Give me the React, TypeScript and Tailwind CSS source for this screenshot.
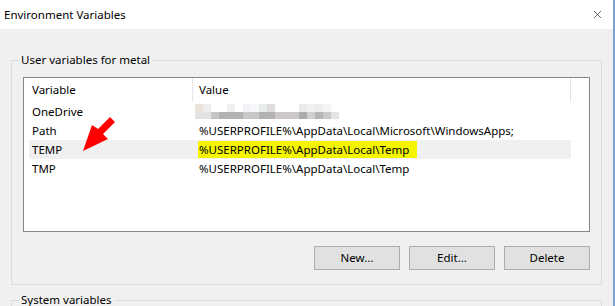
import { X } from 'lucide-react';

const rows = [
  { name: 'OneDrive', value: null },
  { name: 'Path', value: '%USERPROFILE%\\AppData\\Local\\Microsoft\\WindowsApps;' },
  { name: 'TEMP', value: '%USERPROFILE%\\AppData\\Local\\Temp', marked: true },
  { name: 'TMP', value: '%USERPROFILE%\\AppData\\Local\\Temp' },
];

// pixelated blur over the OneDrive path: [width, top colour, bottom colour]
const blurCells: [number, string, string][] = [
  [8, '#e9e6d8', '#e2e2e2'],
  [8, '#eeeeee', '#e2e2e2'],
  [8, '#ffffff', '#c7c4c7'],
  [8, '#ffffff', '#b3b2b3'],
  [8, '#efefef', '#b3b2b3'],
  [8, '#ffffff', '#b3b2b3'],
  [8, '#f2f3f7', '#c9c6c9'],
  [8, '#f5f7fa', '#c9c6c9'],
  [8, '#e8eceb', '#b3b2b3'],
  [8, '#e0dde0', '#b3b2b3'],
  [8, '#ffffff', '#cbc7cb'],
  [8, '#ffffff', '#cbc7cb'],
  [8, '#ffffff', '#cbc7cb'],
  [8, '#eaeaea', '#ababab'],
  [8, '#f0f0f0', '#cfcfcf'],
  [8, '#ececec', '#b5b5b5'],
  [8, '#f4f4f4', '#c9c9c9'],
  [8, '#ffffff', '#e4e4e4'],
];

function Blurred() {
  return (
    <div className="-ml-[4px] flex h-[19px] items-center">
      <div className="flex">
        {blurCells.map(([w, top, bottom], i) => (
          <div key={i} className="flex flex-col" style={{ width: w }}>
            <div className="h-[8px]" style={{ background: top }} />
            <div className="h-[7px]" style={{ background: bottom }} />
          </div>
        ))}
      </div>
    </div>
  );
}

function Button({ label }: { label: string }) {
  return (
    <button className="h-[24px] w-[86px] border border-[#adadad] bg-[#e1e1e1] text-[11.5px] leading-none text-black">
      {label}
    </button>
  );
}

export default function App() {
  return (
    <div
      className="relative h-[306px] w-[615px] overflow-hidden border-r-2 border-[#7aa3d6] bg-[#f0f0f0] text-black"
      style={{ fontFamily: '"Noto Sans", "Open Sans", sans-serif' }}
    >
      {/* TITLE BAR */}
      <div className="flex h-[29px] items-center justify-between bg-white pr-[9px] pl-[4px]">
        <span className="text-[11.5px]">Environment Variables</span>
        <X size={13} strokeWidth={1.1} className="text-black" />
      </div>

      {/* USER VARIABLES */}
      <fieldset className="mx-[11px] mt-[23px] border border-[#dcdcdc] px-[11px] pb-[14px]">
        <legend className="ml-[-4px] px-[2px] text-[11.5px] leading-[16px]">User variables for metal</legend>

        <div className="mt-[9px] h-[155px] border border-[#828790] bg-white">
          {/* HEADER */}
          <div className="ml-[5px] flex h-[24px] w-[542px] border-r border-[#e5e5e5] text-[11.5px]">
            <div className="flex w-[164px] items-center border-r border-[#e5e5e5] pl-[3px]">Variable</div>
            <div className="flex items-center pl-[6px]">Value</div>
          </div>

          {/* ROWS */}
          <div className="ml-[5px] w-[542px] text-[11.5px]">
            {rows.map((r) => (
              <div key={r.name} className={`flex h-[19px] items-center ${r.marked ? 'bg-[#f0f0f0]' : ''}`}>
                <div className="w-[164px] pl-[3px]">{r.name}</div>
                <div className="pl-[6px] whitespace-nowrap">
                  {r.value === null ? (
                    <Blurred />
                  ) : r.marked ? (
                    <span className="-ml-[1px] inline-block bg-[#f5f500] pr-[8px] pl-[1px] leading-[17px]">{r.value}</span>
                  ) : (
                    r.value
                  )}
                </div>
              </div>
            ))}
          </div>
        </div>

        <div className="mt-[14px] flex justify-end gap-[9px]">
          <Button label="New..." />
          <Button label="Edit..." />
          <Button label="Delete" />
        </div>
      </fieldset>

      {/* SYSTEM VARIABLES */}
      <fieldset className="mx-[11px] mt-[7px] h-[40px] border border-[#dcdcdc] px-[11px]">
        <legend className="ml-[-4px] px-[2px] text-[11.5px] leading-[16px]">System variables</legend>
      </fieldset>

      {/* red annotation arrow */}
      <svg className="absolute top-0 left-0" width="615" height="306" viewBox="0 0 615 306">
        <polygon
          points="83,151 92,125 98,129 110,117 115,122 103,134 108,139"
          fill="#ff0000"
        />
      </svg>
    </div>
  );
}
